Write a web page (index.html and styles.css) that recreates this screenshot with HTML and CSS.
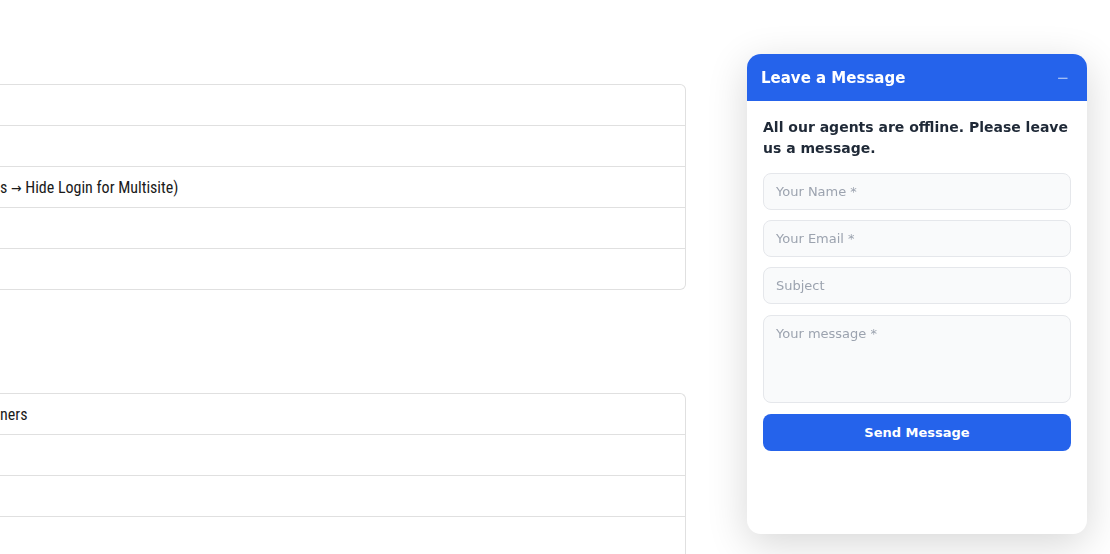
FILE: index.html
```html
<!DOCTYPE html>
<html lang="en">
<head>
    <meta charset="UTF-8">
    <meta name="viewport" content="width=device-width, initial-scale=1.0">
    <title>Leave a Message</title>
    <link rel="stylesheet" href="styles.css">
</head>
<body>
    <div class="page">
        <div class="content">
            <div class="table first">
                <div class="row"></div>
                <div class="row"></div>
                <div class="row"><span>s <span class="arrow">&rarr;</span> Hide Login for Multisite)</span></div>
                <div class="row"></div>
                <div class="row"></div>
            </div>
            <div class="table second">
                <div class="row"><span>ners</span></div>
                <div class="row"></div>
                <div class="row"></div>
                <div class="row"></div>
            </div>
        </div>
    </div>

    <div class="chat">
        <div class="chat-header">
            <span class="chat-title">Leave a Message</span>
            <button class="minimize" type="button">&minus;</button>
        </div>
        <form class="chat-body">
            <p class="offline">All our agents are offline. Please leave us a message.</p>
            <input type="text" placeholder="Your Name *">
            <input type="email" placeholder="Your Email *">
            <input type="text" placeholder="Subject">
            <textarea placeholder="Your message *"></textarea>
            <button type="submit" class="send">Send Message</button>
        </form>
    </div>
</body>
</html>
```

FILE: styles.css
```css
/* Reset */
* {
    margin: 0;
    padding: 0;
    box-sizing: border-box;
}

html, body {
    height: 100%;
}

body {
    background: #fff;
    font-family: "DejaVu Sans", sans-serif;
    overflow: hidden;
}

/* Page behind the widget (scrolled off to the left) */
.page {
    width: 686px;
    padding-top: 84px;
}

.content {
    margin-left: -20px;
}

.table {
    border: 1px solid #e0e0e0;
    border-left: none;
    border-radius: 0 6px 6px 0;
}

.table.second {
    margin-top: 103px;
    border-bottom: none;
    border-radius: 0 6px 0 0;
}

.row {
    height: 41px;
    padding-left: 20px;
    display: flex;
    align-items: center;
    font-family: "Roboto Condensed", "Roboto", sans-serif;
    font-stretch: condensed;
    font-size: 16px;
    color: #1a1a1a;
}

.row:first-child {
    height: 40px;
}

.row + .row {
    border-top: 1px solid #e0e0e0;
}

.arrow {
    font-family: "DejaVu Sans Condensed", sans-serif;
    font-size: 14px;
}

/* Chat widget */
.chat {
    position: fixed;
    top: 54px;
    left: 747px;
    width: 340px;
    height: 480px;
    background: #fff;
    border-radius: 14px;
    box-shadow: 0 10px 40px rgba(0, 0, 0, 0.16);
    overflow: hidden;
}

.chat-header {
    height: 47px;
    background: #2563eb;
    display: flex;
    align-items: center;
    justify-content: space-between;
    padding: 0 14px;
}

.chat-title {
    color: #fff;
    font-weight: bold;
    font-size: 15px;
}

.minimize {
    background: none;
    border: none;
    color: #a9c2f5;
    font-size: 15px;
    font-family: "DejaVu Sans", sans-serif;
    cursor: pointer;
    padding: 0 4px;
}

.chat-body {
    padding: 16px;
    display: flex;
    flex-direction: column;
}

.offline {
    font-size: 14px;
    font-weight: bold;
    line-height: 21px;
    color: #1f2937;
    margin-bottom: 14px;
}

.chat-body input,
.chat-body textarea {
    width: 100%;
    height: 37px;
    padding: 0 12px;
    margin-bottom: 10px;
    background: #f9fafb;
    border: 1px solid #e5e7eb;
    border-radius: 8px;
    font-family: "DejaVu Sans", sans-serif;
    font-size: 13px;
    color: #1f2937;
    outline: none;
}

.chat-body textarea {
    height: 88px;
    padding: 10px 12px;
    resize: none;
    margin-top: 1px;
    margin-bottom: 11px;
}

.chat-body input::placeholder,
.chat-body textarea::placeholder {
    color: #9ca3af;
}

.send {
    height: 37px;
    background: #2563eb;
    border: none;
    border-radius: 8px;
    color: #fff;
    font-family: "DejaVu Sans", sans-serif;
    font-weight: bold;
    font-size: 13px;
    cursor: pointer;
}
```
